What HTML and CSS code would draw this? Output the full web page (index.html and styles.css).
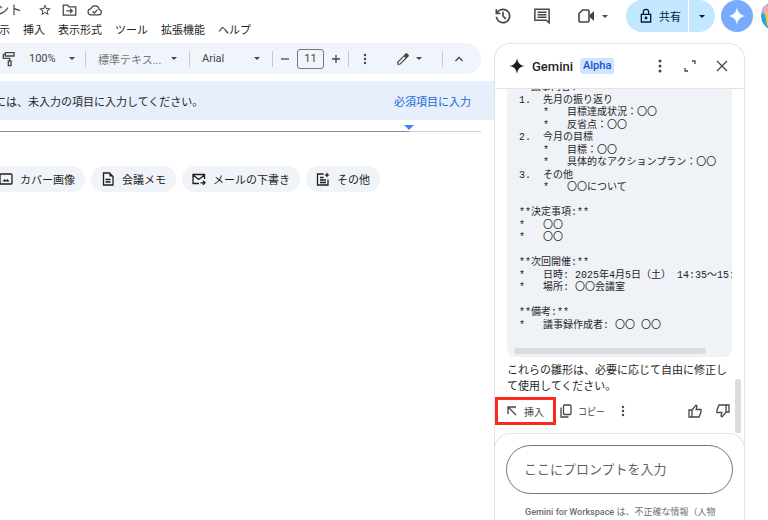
FILE: index.html
```html
<!DOCTYPE html>
<html lang="ja">
<head>
  <meta charset="utf-8">
  <title>ドキュメント</title>
  <link rel="stylesheet" href="styles.css">
</head>
<body>
  <header class="header">
    <div class="doc-info">
      <div class="title-row">
        <span class="doc-title">ント</span>
        <button class="icon-button" aria-label="スターを付ける">
          <svg width="14" height="14" viewBox="0 0 24 24"><path d="M22 9.24l-7.19-.62L12 2 9.19 8.63 2 9.24l5.46 4.73L5.82 21 12 17.27 18.18 21l-1.63-7.03L22 9.24zM12 15.4l-3.76 2.27 1-4.28-3.32-2.88 4.38-.38L12 6.1l1.71 4.04 4.38.38-3.32 2.88 1 4.28L12 15.4z"/></svg>
        </button>
        <button class="icon-button" aria-label="移動">
          <svg class="line" width="15" height="14" viewBox="0 0 24 22"><path d="M2 4v15h20V6H11L9 3H2z"/><path d="M7 12.5h9M13 9l3.5 3.5L13 16"/></svg>
        </button>
        <button class="icon-button" aria-label="保存済み">
          <svg class="line" width="16" height="14" viewBox="0 0 26 22"><path d="M7 19a5 5 0 0 1-.6-10A7 7 0 0 1 19.800 10 4.600 4.600 0 0 1 19.500 19z"/><path d="M9 13l3 3 5-5.500"/></svg>
        </button>
      </div>
      <nav class="menu">
        <button>表示</button>
        <button>挿入</button>
        <button>表示形式</button>
        <button>ツール</button>
        <button>拡張機能</button>
        <button>ヘルプ</button>
      </nav>
    </div>
    <div class="header-actions">
      <button class="icon-button" aria-label="変更履歴">
        <svg width="20" height="20" viewBox="0 -960 960 960"><path d="M480-120q-138 0-240.500-91.500T122-440h82q14 104 92.500 172T480-200q117 0 198.500-81.500T760-480q0-117-81.500-198.500T480-760q-69 0-129 32t-101 88h110v80H120v-240h80v94q51-64 124.500-99T480-840q75 0 140.500 28.500t114 77q48.500 48.500 77 114T840-480q0 75-28.500 140.500t-77 114q-48.500 48.500-114 77T480-120Zm112-192L440-464v-216h80v184l128 128-56 56Z"/></svg>
      </button>
      <button class="icon-button comment" aria-label="コメント">
        <svg class="line" width="18" height="18" viewBox="0 0 24 24"><path d="M2.500 3h19v18l-4-3.500h-15z"/><path d="M6 7h12M6 10.300h12M6 13.600h12"/></svg>
      </button>
      <button class="icon-button meet" aria-label="ビデオ通話">
        <svg width="18" height="16" viewBox="0 0 18 16"><path class="outline" d="M5.500 2H11a1 1 0 0 1 1 1v10a1 1 0 0 1-1 1H3a1 1 0 0 1-1-1V5.500z"/><path d="M12.500 7L17 3v10l-4.500-4z"/></svg>
        <span class="caret"></span>
      </button>
      <div class="share">
        <button class="share-main">
          <svg class="line" width="14" height="16" viewBox="0 0 21 24"><path d="M3.500 9.500h14v11.500h-14zM6.500 9V6a4 4 0 0 1 8 0v3"/><circle cx="10.500" cy="15" r="1.200"/></svg>
          共有
        </button>
        <button class="share-more" aria-label="共有オプション"><span class="caret"></span></button>
      </div>
      <button class="gemini-button" aria-label="Gemini">
        <svg width="18" height="18" viewBox="0 0 24 24"><path d="M12 0c1 7.500 4.500 11 12 12-7.500 1-11 4.500-12 12-1-7.500-4.500-11-12-12 7.500-1 11-4.500 12-12z"/></svg>
      </button>
      <svg class="avatar" width="28" height="28" viewBox="0 0 28 28"><circle cx="14" cy="14" r="14" fill="#29a5dc"/><circle cx="6" cy="8" r="5" fill="#e9a9b5"/><path d="M4 11l8-3v16H6z" fill="#f6c644"/></svg>
    </div>
  </header>

  <div class="workspace">
    <main class="editor">
      <div class="toolbar">
        <button class="icon-button" aria-label="書式の貼り付け">
          <svg class="line" width="14" height="16" viewBox="0 0 21 24"><path d="M5 2.500h13v5H5zM5 5H2v6h9.500v4"/><path d="M9.500 15h4v7h-4z"/></svg>
        </button>
        <button class="select zoom">100%<span class="caret"></span></button>
        <span class="divider"></span>
        <button class="select style">標準テキス...<span class="caret"></span></button>
        <span class="divider"></span>
        <button class="select font">Arial<span class="caret"></span></button>
        <span class="divider"></span>
        <div class="font-size">
          <button class="icon-button" aria-label="縮小">
            <svg class="line" width="10" height="10" viewBox="0 0 10 10"><path d="M1 5h8"/></svg>
          </button>
          <input type="text" value="11" aria-label="フォントサイズ">
          <button class="icon-button" aria-label="拡大">
            <svg class="line" width="10" height="10" viewBox="0 0 10 10"><path d="M1 5h8M5 1v8"/></svg>
          </button>
        </div>
        <span class="divider"></span>
        <button class="icon-button more" aria-label="その他">
          <svg width="4" height="12" viewBox="0 0 4 12"><circle cx="2" cy="2" r="1.200"/><circle cx="2" cy="6" r="1.200"/><circle cx="2" cy="10" r="1.200"/></svg>
        </button>
        <button class="icon-button edit-mode" aria-label="編集モード">
          <svg width="14" height="14" viewBox="0 0 24 24"><path d="M2 17v5h5L21.500 7.500a2 2 0 0 0 0-2.800L19.300 2.500a2 2 0 0 0-2.800 0zm4.200 3H4v-2.200L14 7.800 16.200 10z" fill-rule="evenodd"/></svg>
          <span class="caret"></span>
        </button>
        <span class="divider"></span>
        <button class="icon-button" aria-label="メニューを非表示">
          <svg class="line" width="10" height="8" viewBox="0 0 10 8"><path d="M1.500 6L5 2.500 8.500 6"/></svg>
        </button>
      </div>

      <div class="banner">
        <span>には、未入力の項目に入力してください。</span>
        <a href="#">必須項目に入力</a>
      </div>

      <div class="ruler">
        <div class="ruler-page"></div>
        <div class="ruler-margin"></div>
      </div>

      <div class="chips">
        <button class="chip">
          <svg class="line" width="14" height="14" viewBox="0 0 14 14"><rect x="1" y="2" width="12" height="10" rx="1"/><path d="M3.500 9.500l2-2.500 1.500 1.500L8.500 7l2 2.500z" class="solid"/></svg>
          カバー画像
        </button>
        <button class="chip">
          <svg class="line" width="14" height="14" viewBox="0 0 14 14"><path d="M2.500 1h6L12 4.500V13H2.500z"/><path d="M8.500 1v3.500H12z" class="solid"/><path d="M4.500 7.500h5M4.500 10h5"/></svg>
          会議メモ
        </button>
        <button class="chip">
          <svg class="line" width="14" height="14" viewBox="0 0 14 14"><path d="M7 11.500H1v-9h11.500V7M1 3l5.750 4.500L12.500 3M8.500 10.800h4.500M11 8.800l2 2-2 2"/></svg>
          メールの下書き
        </button>
        <button class="chip">
          <svg class="line" width="14" height="14" viewBox="0 0 14 14"><path d="M7.500 2H1.500v11h10.500V7.500M4 5.500h3.500M4 8h6M4 10.500h6"/><path d="M11 0l.8 2.200L14 3l-2.200.8L11 6l-.8-2.200L8 3l2.200-.8z" class="fill"/></svg>
          その他
        </button>
      </div>
    </main>

    <aside class="panel">
      <div class="panel-header">
        <svg width="16" height="16" viewBox="0 0 24 24"><path d="M12 0c1 7.500 4.500 11 12 12-7.500 1-11 4.500-12 12-1-7.500-4.500-11-12-12 7.500-1 11-4.500 12-12z"/></svg>
        <h2>Gemini</h2>
        <span class="badge">Alpha</span>
        <div class="panel-tools">
          <button class="icon-button" aria-label="その他のオプション">
            <svg width="4" height="14" viewBox="0 0 4 14"><circle cx="2" cy="2" r="1.500"/><circle cx="2" cy="7" r="1.500"/><circle cx="2" cy="12" r="1.500"/></svg>
          </button>
          <button class="icon-button" aria-label="展開">
            <svg class="line" width="12" height="12" viewBox="0 0 12 12"><path d="M8 1h3v3M1 8v3h3"/></svg>
          </button>
          <button class="icon-button" aria-label="閉じる">
            <svg class="line" width="12" height="12" viewBox="0 0 12 12"><path d="M1 1l10 10M11 1L1 11"/></svg>
          </button>
        </div>
      </div>

      <div class="conversation">
        <div class="code-block">
<pre>
**議事内容:**
1.  先月の振り返り
    *   目標達成状況：〇〇
    *   反省点：〇〇
2.  今月の目標
    *   目標：〇〇
    *   具体的なアクションプラン：〇〇
3.  その他
    *   〇〇について

**決定事項:**
*   〇〇
*   〇〇

**次回開催:**
*   日時: 2025年4月5日（土） 14:35〜15:35
*   場所: 〇〇会議室

**備考:**
*   議事録作成者: 〇〇 〇〇
</pre>
          <div class="code-scroll"></div>
        </div>
        <p class="answer">これらの雛形は、必要に応じて自由に修正して使用してください。</p>
        <div class="answer-actions">
          <button class="action highlight">
            <svg class="line" width="10" height="10" viewBox="0 0 10 10"><path d="M1 8V1h8M1.500 1.500L9 9"/></svg>
            挿入
          </button>
          <button class="action copy">
            <svg class="line" width="12" height="14" viewBox="0 0 12 14"><rect x="3.500" y="1" width="7.500" height="9.500" rx="1"/><path d="M1 3.500V13h7.500"/></svg>
            コピー
          </button>
          <button class="action more" aria-label="その他">
            <svg width="4" height="12" viewBox="0 0 4 12"><circle cx="2" cy="2" r="1.200"/><circle cx="2" cy="6" r="1.200"/><circle cx="2" cy="10" r="1.200"/></svg>
          </button>
          <div class="rating">
            <button class="action" aria-label="良い回答">
              <svg class="line" width="14" height="14" viewBox="0 0 14 14"><path d="M1 6h3v7H1zM4 6l4-4.800 1 .8-.8 3.500H13V8l-2 5H4z"/></svg>
            </button>
            <button class="action" aria-label="悪い回答">
              <svg class="line" width="14" height="14" viewBox="0 0 14 14"><path d="M13 8h-3V1h3zM10 8l-4 4.800-1-.8.800-3.500H1V6l2-5h7z"/></svg>
            </button>
          </div>
        </div>
        <div class="scroll-thumb"></div>
      </div>

      <form class="prompt">
        <input type="text" placeholder="ここにプロンプトを入力" aria-label="ここにプロンプトを入力">
        <p><b>Gemini for Workspace</b> は、不正確な情報（人物</p>
      </form>
    </aside>
  </div>
</body>
</html>
```
FILE: styles.css
```css
* {
  box-sizing: border-box;
}

body {
  display: flex;
  flex-direction: column;
  height: 100vh;
  margin: 0;
  overflow: hidden;
  background-color: #fff;
  color: #444746;
  font-family: Roboto, "Noto Sans CJK JP", sans-serif;
  font-size: 11px;
}

button {
  display: flex;
  align-items: center;
  flex-shrink: 0;
  padding: 0;
  border: none;
  background: none;
  color: inherit;
  font: inherit;
  white-space: nowrap;
  cursor: pointer;
}

svg {
  flex-shrink: 0;
  fill: #444746;
}

.line {
  fill: none;
  stroke: #444746;
  stroke-width: 2;
}

.line[viewBox^="0 0 10"],
.line[viewBox^="0 0 12"],
.line[viewBox^="0 0 14"] {
  stroke-width: 1.3;
}

.caret {
  border: 3px solid transparent;
  border-top-color: currentColor;
  border-bottom: none;
}

/* Header */
.header {
  display: flex;
  flex-shrink: 0;
  height: 43px;
}

.doc-info {
  flex: 1;
  min-width: 0;
}

.title-row {
  display: flex;
  align-items: center;
  gap: 10px;
  height: 20px;
  margin-left: -4px;
}

.doc-title {
  margin-right: 6px;
  font-size: 13px;
  line-height: 20px;
}

.menu {
  display: flex;
  gap: 13px;
  height: 18px;
  margin-left: -12px;
  color: #1f1f1f;
}

.header-actions {
  display: flex;
  align-items: center;
  flex: 0 0 275px;
  min-width: 0;
  height: 32px;
}

.comment {
  margin-left: 20px;
}

.meet {
  gap: 7px;
  margin-left: 26px;
}

.meet .outline {
  fill: none;
  stroke: #444746;
  stroke-width: 1.6;
}

.share {
  display: flex;
  flex-shrink: 0;
  gap: 1px;
  height: 32px;
  margin-left: 18px;
  color: #001d35;
}

.share-main {
  gap: 6px;
  width: 62px;
  padding-left: 13px;
  border-radius: 16px 0 0 16px;
  background-color: #c2e7ff;
}

.share-main svg {
  stroke: #001d35;
}

.share-more {
  justify-content: center;
  width: 26px;
  border-radius: 0 16px 16px 0;
  background-color: #c2e7ff;
}

.gemini-button {
  justify-content: center;
  width: 32px;
  height: 32px;
  margin-left: 6px;
  border-radius: 50%;
  background-color: #76acfb;
}

.gemini-button svg {
  fill: #fff;
}

.avatar {
  margin-left: 8px;
}

/* Editor */
.workspace {
  display: flex;
  flex: 1;
  min-height: 0;
}

.editor {
  flex: 1;
  min-width: 0;
}

.toolbar {
  display: flex;
  align-items: center;
  height: 31px;
  margin-right: 13px;
  padding: 0 17px 0 2px;
  border-radius: 0 16px 16px 0;
  background-color: #f0f4fb;
}

.divider {
  width: 1px;
  height: 16px;
  background-color: #c7c7c7;
}

.select {
  justify-content: space-between;
}

.zoom {
  width: 46px;
  margin-right: 10px;
  margin-left: 13px;
}

.style {
  width: 79px;
  margin: 0 12px;
  color: #747775;
}

.style .caret {
  color: #444746;
}

.font {
  width: 58px;
  margin: 0 12px;
}

.font-size {
  display: flex;
  align-items: center;
  gap: 7px;
  margin: 0 7px;
}

.font-size input {
  width: 27px;
  height: 20px;
  padding: 0;
  border: 1px solid #747775;
  border-radius: 3px;
  background: none;
  color: #444746;
  font: inherit;
  text-align: center;
}

.toolbar .more {
  margin-left: 14px;
}

.edit-mode {
  gap: 6px;
  margin-right: 20px;
  margin-left: auto;
}

.edit-mode + .divider {
  margin-right: 11px;
}

.banner {
  display: flex;
  align-items: center;
  justify-content: space-between;
  height: 39px;
  margin-top: 7px;
  padding-right: 23px;
  background-color: #e8effc;
  color: #1f1f1f;
  white-space: nowrap;
}

.banner span {
  margin-left: -5px;
}

.banner a {
  color: #1967d2;
  text-decoration: none;
}

.ruler {
  display: flex;
  height: 12px;
  margin-right: 13px;
}

.ruler-page {
  position: relative;
  flex: 1;
  border-bottom: 1px solid #8e8e8e;
}

.ruler-page::after {
  position: absolute;
  right: -5px;
  bottom: 1px;
  border: 5px solid transparent;
  border-top-color: #4285f4;
  border-bottom: none;
  content: "";
}

.ruler-margin {
  width: 72px;
  border-bottom: 1px solid #d0d0d0;
}

.chips {
  display: flex;
  gap: 6px;
  margin-top: 34px;
  margin-left: -11px;
}

.chip {
  gap: 7px;
  height: 26px;
  padding: 0 10px;
  border-radius: 13px;
  background-color: #f0f3f8;
  color: #1f1f1f;
}

.chip svg {
  stroke: #1f1f1f;
}

.chip .solid,
.chip .fill {
  fill: #1f1f1f;
  stroke: none;
}

/* Gemini panel */
.panel {
  display: flex;
  flex-direction: column;
  width: 251px;
  margin-right: 23px;
  border: 1px solid #e3e3e3;
  border-bottom: none;
  border-radius: 16px 16px 0 0;
  background-color: #fff;
  color: #1f1f1f;
}

.panel-header {
  display: flex;
  align-items: center;
  flex-shrink: 0;
  height: 45px;
  padding: 0 16px 0 14px;
  border-bottom: 1px solid #e3e3e3;
}

.panel-header > svg {
  fill: #1f1f1f;
}

.panel-header h2 {
  margin: 0 7px;
  font-size: 13px;
  font-weight: 500;
}

.badge {
  padding: 0 3px;
  border-radius: 3px;
  background-color: #d3e3fd;
  color: #0b57d0;
  font-weight: 500;
  line-height: 16px;
}

.panel-tools {
  display: flex;
  align-items: center;
  gap: 22px;
  margin-left: auto;
}

.panel-tools button:last-child {
  margin-left: -2px;
}

.conversation {
  position: relative;
  display: flex;
  flex: 1;
  flex-direction: column;
  justify-content: flex-end;
  min-height: 0;
  padding-bottom: 8px;
  overflow: hidden;
}

.code-block {
  flex-shrink: 0;
  margin: 0 12px;
  padding: 12px 0 3px 7px;
  border-radius: 0 0 8px 8px;
  background-color: #eff2f7;
}

.code-block pre {
  margin: 0 0 16px;
  padding-left: 5px;
  overflow: hidden;
  font-family: "Liberation Mono", "Noto Sans CJK JP", monospace;
  font-size: 10px;
  line-height: 1.25;
}

.code-scroll {
  width: 88%;
  height: 6px;
  border-radius: 3px;
  background-color: #dadce0;
}

.answer {
  flex-shrink: 0;
  margin: 6px 12px 2px;
  line-height: 16px;
  word-break: break-all;
}

.answer-actions {
  display: flex;
  flex-shrink: 0;
  height: 28px;
}

.action {
  color: #444746;
  font-size: 10px;
}

.highlight {
  gap: 7px;
  padding: 0 9px;
  border: 3px solid #fb2a1c;
}

.copy {
  gap: 6px;
  margin-left: 4px;
  font-size: 9px;
}

.action.more {
  margin-left: 16px;
}

.rating {
  display: flex;
  gap: 14px;
  margin-right: 14px;
  margin-left: auto;
}

.scroll-thumb {
  position: absolute;
  right: 3px;
  bottom: 0;
  width: 6px;
  height: 54px;
  border-radius: 3px 3px 0 0;
  background-color: #dadce0;
}

.prompt {
  flex-shrink: 0;
  margin: 0 -1px;
  padding: 11px 11px 1px;
  border: 1px solid #e3e3e3;
  border-bottom: none;
  border-radius: 16px 16px 0 0;
}

.prompt input {
  display: block;
  width: 100%;
  height: 49px;
  padding: 0 17px;
  border: 1px solid #747775;
  border-radius: 25px;
  background: none;
  color: #1f1f1f;
  font: inherit;
  font-size: 13px;
}

.prompt input::placeholder {
  color: #5f6368;
}

.prompt p {
  margin: 11px 0 0 19px;
  color: #6b6e70;
  font-size: 9px;
  line-height: 14px;
  white-space: nowrap;
}

.prompt b {
  font-weight: 500;
}
```
